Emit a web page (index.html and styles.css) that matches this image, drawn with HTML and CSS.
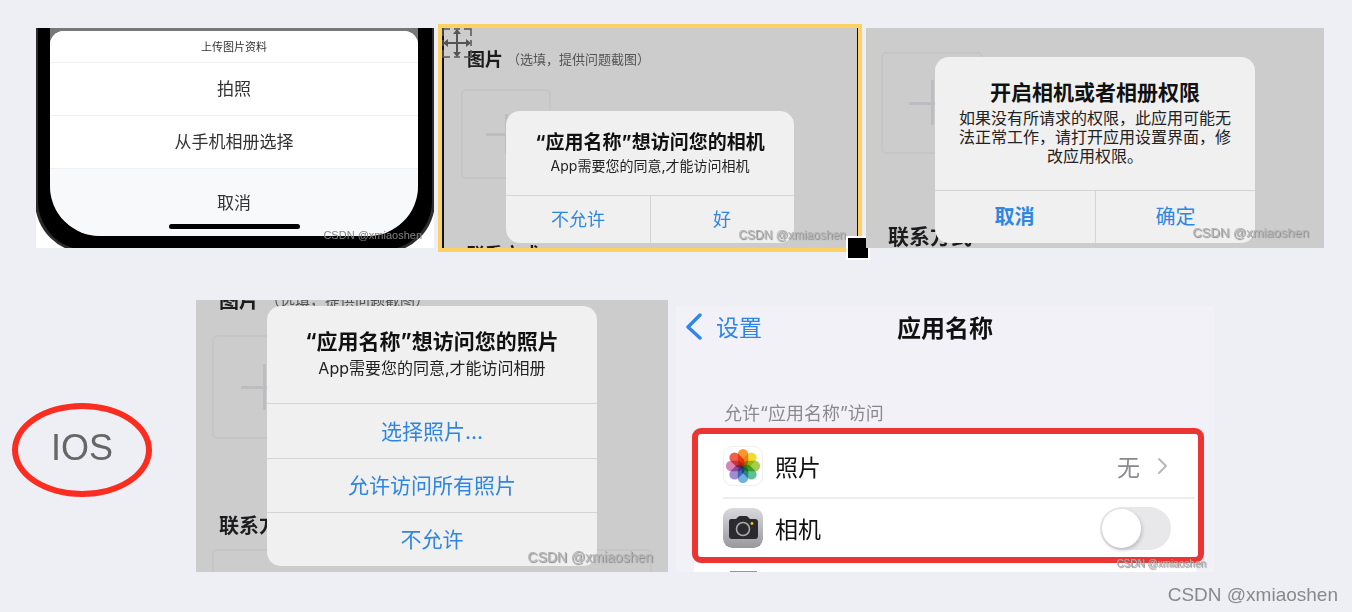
FILE: index.html
```html
<!DOCTYPE html>
<html lang="zh-CN">
<head>
<meta charset="utf-8">
<meta name="viewport" content="width=device-width, initial-scale=1">
<title>IOS 权限</title>
<link rel="stylesheet" href="styles.css">
</head>
<body>
<main class="board">
  <div class="row row-top">
    <section class="shot phone">
      <div class="bezel">
        <div class="screen">
          <div class="sheet">
            <h2 class="sheet-title">上传图片资料</h2>
            <button class="sheet-item" type="button">拍照</button>
            <button class="sheet-item" type="button">从手机相册选择</button>
            <button class="sheet-item sheet-cancel" type="button">取消</button>
            <div class="home-bar"></div>
          </div>
        </div>
      </div>
      <span class="mark mark-xs">CSDN @xmiaoshen</span>
    </section>

    <section class="shot selected">
      <div class="form form-camera">
        <p class="field"><b>图片</b><small>（选填，提供问题截图）</small></p>
        <div class="upload"></div>
        <p class="field"><b>联系方式</b></p>
      </div>
      <div class="alert">
        <div class="alert-text">
          <h2>“应用名称”想访问您的相机</h2>
          <p>App需要您的同意,才能访问相机</p>
        </div>
        <div class="actions">
          <button type="button">不允许</button>
          <button type="button">好</button>
        </div>
      </div>
      <span class="mark mark-s">CSDN @xmiaoshen</span>
      <svg class="move" viewBox="0 0 30 30" width="30" height="30" fill="none" stroke="#555" stroke-width="2">
        <path d="M1 8V1h7M12 1h6M22 1h7v7M1 12v6M29 12v6M1 22v7h7M12 29h6M22 29h7v-7" stroke-width="1.5"/>
        <path d="M15 4v22M4 15h22"/>
        <path d="M15 1l4 5h-8zM15 29l4-5h-8zM1 15l5-4v8zM29 15l-5-4v8z" fill="#555" stroke="none"/>
      </svg>
      <span class="handle"></span>
    </section>

    <section class="shot settings-ask">
      <div class="form form-ask">
        <p class="field"><b>图片</b></p>
        <div class="upload"></div>
        <p class="field"><b>联系方式</b></p>
      </div>
      <div class="alert alert-l">
        <div class="alert-text">
          <h2>开启相机或者相册权限</h2>
          <p>如果没有所请求的权限，此应用可能无法正常工作，请打开应用设置界面，修改应用权限。</p>
        </div>
        <div class="actions">
          <button class="strong" type="button">取消</button>
          <button type="button">确定</button>
        </div>
      </div>
      <span class="mark mark-m">CSDN @xmiaoshen</span>
    </section>
  </div>

  <div class="row row-bottom">
    <div class="platform">IOS</div>

    <section class="shot photos">
      <div class="form form-photos">
        <p class="field"><b>图片</b><small>（选填，提供问题截图）</small></p>
        <div class="upload"></div>
        <p class="field"><b>联系方式</b></p>
        <div class="textbox"></div>
      </div>
      <div class="alert alert-l">
        <div class="alert-text">
          <h2>“应用名称”想访问您的照片</h2>
          <p>App需要您的同意,才能访问相册</p>
        </div>
        <div class="actions stacked">
          <button type="button">选择照片...</button>
          <button type="button">允许访问所有照片</button>
          <button type="button">不允许</button>
        </div>
      </div>
      <span class="mark mark-l">CSDN @xmiaoshen</span>
    </section>

    <section class="settings">
      <header class="nav">
        <a class="back" href="#settings">
          <svg viewBox="0 0 16 28" width="16" height="28" fill="none" stroke="#2f86e8" stroke-width="3.400" stroke-linecap="round" stroke-linejoin="round"><path d="M14 3L2 15l12 11"/></svg>
          设置
        </a>
        <h1>应用名称</h1>
      </header>
      <p class="caption">允许“应用名称”访问</p>
      <div class="group">
        <a class="item" href="#photos">
          <svg class="app photos-app" viewBox="0 0 40 40" width="40" height="40">
            <g class="petals">
              <rect x="14.500" y="2" width="11" height="18" rx="5.500" fill="#f8972c"/>
              <rect x="14.500" y="2" width="11" height="18" rx="5.500" fill="#f0dc30" transform="rotate(45 20 20)"/>
              <rect x="14.500" y="2" width="11" height="18" rx="5.500" fill="#a2d046" transform="rotate(90 20 20)"/>
              <rect x="14.500" y="2" width="11" height="18" rx="5.500" fill="#5cc094" transform="rotate(135 20 20)"/>
              <rect x="14.500" y="2" width="11" height="18" rx="5.500" fill="#70b0e6" transform="rotate(180 20 20)"/>
              <rect x="14.500" y="2" width="11" height="18" rx="5.500" fill="#a08cd0" transform="rotate(225 20 20)"/>
              <rect x="14.500" y="2" width="11" height="18" rx="5.500" fill="#d884bc" transform="rotate(270 20 20)"/>
              <rect x="14.500" y="2" width="11" height="18" rx="5.500" fill="#f0604e" transform="rotate(315 20 20)"/>
            </g>
          </svg>
          <span class="name">照片</span>
          <span class="value">无</span>
          <svg viewBox="0 0 11 18" width="11" height="18" fill="none" stroke="#b8b8bb" stroke-width="2" stroke-linecap="round" stroke-linejoin="round"><path d="M2 2l7 7-7 7"/></svg>
        </a>
        <label class="item">
          <svg class="app" viewBox="0 0 40 40" width="40" height="40">
            <defs><linearGradient id="metal" x1="0" y1="0" x2="0" y2="1"><stop offset="0" stop-color="#d9d9de"/><stop offset="1" stop-color="#98989d"/></linearGradient></defs>
            <rect width="40" height="40" rx="9" fill="url(#metal)"/>
            <path d="M8 11h5l2-2q1-1 2-1h6q1 0 2 1l2 2h5q3 0 3 3v14q0 3-3 3H9q-3 0-3-3V14q0-3 2-3z" fill="#2b2b2d"/>
            <circle cx="20" cy="21" r="6.500" fill="#2b2b2d" stroke="#a9a9ad" stroke-width="1.600"/>
            <circle cx="29" cy="15.500" r="1.400" fill="#f2c230"/>
          </svg>
          <span class="name">相机</span>
          <input class="switch" type="checkbox">
        </label>
      </div>
      <div class="next"><span></span></div>
      <span class="mark mark-xxs">CSDN @xmiaoshen</span>
    </section>
  </div>
  <footer class="credit">CSDN @xmiaoshen</footer>
</main>
</body>
</html>
```
FILE: styles.css
```css
* { box-sizing: border-box; }
body {
  margin: 0;
  background: #eeeff4;
  color: #111;
  font-family: Inter, "Noto Sans CJK SC", sans-serif;
}
h1, h2, p { margin: 0; }
button {
  border: 0;
  padding: 0;
  background: none;
  font: inherit;
  color: inherit;
}
a { color: inherit; text-decoration: none; }

.board { display: flex; flex-direction: column; min-height: 100vh; }
.row { display: flex; gap: 8px; }
.row-top { padding: 28px 28px 0 36px; }
.row-bottom { padding: 52px 138px 0 12px; }
.shot { position: relative; min-width: 0; }

/* Action sheet on a phone */
.phone { flex: 398 1 0; display: flex; overflow: hidden; background: #fff; }
.bezel {
  flex: 1;
  margin: 0 -1px -5px;
  padding: 0 14px 14px 12px;
  background: #000;
  border: solid #2c2c2e;
  border-width: 0 3px 3px;
  border-radius: 0 0 52px 52px;
}
.screen {
  padding-top: 3px;
  background: #777;
  border-radius: 0 0 50px 50px;
  overflow: hidden;
}
.sheet {
  display: flex;
  flex-direction: column;
  align-items: stretch;
  padding-bottom: 7px;
  background: #f8f9fb;
  border-radius: 14px 14px 0 0;
  overflow: hidden;
  color: #333;
}
.sheet-title {
  height: 31px;
  background: #fff;
  font-size: 11px;
  font-weight: 400;
  line-height: 32px;
  text-align: center;
}
.sheet-item {
  height: 53px;
  padding-bottom: 3px;
  background: #fff;
  border-top: 1px solid #f0f0f0;
  font-size: 17px;
}
.sheet-cancel { height: 56px; padding: 10px 0 0; background: none; }
.home-bar { width: 131px; height: 5px; margin: 0 auto; background: #000; border-radius: 3px; }

/* Dimmed form behind the alerts */
.selected, .settings-ask, .photos { display: flex; justify-content: center; background: #ccc; }
.form { position: absolute; inset: 0; overflow: hidden; color: #1c1c1e; white-space: nowrap; }
.field { display: flex; align-items: center; height: 24px; }
.field b { font-weight: 700; }
.field small { font-size: 13px; color: #555; }
.upload {
  border: 2px solid #c6c6c9;
  border-radius: 5px;
  background:
    linear-gradient(#bcbcc1, #bcbcc1) center / 46% 3px no-repeat,
    linear-gradient(#bcbcc1, #bcbcc1) center / 3px 46% no-repeat;
}
.textbox { height: 60px; border: 2px solid #c6c6c9; border-radius: 5px; }

.form-camera { padding: 18px 19px 0; border: solid #111; border-width: 0 1px 0 2px; font-size: 18px; }
.form-camera .field { padding-left: 4px; gap: 4px; }
.form-camera .upload { width: 90px; height: 90px; margin: 19px 0 62px -2px; }

.form-ask { padding: 0 15px; font-size: 21px; }
.form-ask .field { padding-left: 7px; }
.form-ask .field:first-child { margin-top: -24px; }
.form-ask .upload { width: 102px; height: 102px; margin: 24px 0 69px; }

.form-photos { padding: 0 16px; font-size: 20px; }
.form-photos .field { padding-left: 7px; gap: 6px; }
.form-photos .field small { font-size: 15px; }
.form-photos .field:first-child { margin-top: -13px; }
.form-photos .upload { width: 104px; height: 104px; margin: 24px 0 73px; }
.form-photos .textbox { margin-top: 13px; }

/* Alerts */
.selected { flex: 416 1 0; padding: 83px 0 5px; outline: 4px solid #fdd163; }
.settings-ask { flex: 458 1 0; padding: 29px 0 5px; z-index: 1; }
.photos { flex: 472 1 0; padding: 6px 0; }
.alert {
  position: relative;
  width: 69%;
  display: flex;
  flex-direction: column;
  background: #f0f0f0;
  border-radius: 14px;
  font-size: 18px;
  text-align: center;
}
.alert-text { flex: 1; padding: 19px 0 0; }
.alert h2 { font-size: 19px; font-weight: 700; line-height: 26px; }
.alert p { color: #222; font-size: 14px; line-height: 20px; }
.alert-l { width: 70%; font-size: 20px; }
.alert-l .alert-text { padding: 23px 24px 0; }
.alert-l h2 { font-size: 21px; }
.alert-l p { padding-top: 3px; font-size: 16px; line-height: 19px; }
.actions { display: flex; border-top: 1px solid #d4d4d6; color: #2f86e0; }
.actions button { flex: 1; height: 47px; padding-bottom: 3px; }
.alert-l .actions button { height: 52px; }
.actions button + button { border-left: 1px solid #d4d4d6; }
.actions .strong { font-weight: 700; }
.photos .actions { flex-direction: column; font-size: 21px; }
.photos .actions button { flex: none; height: 54px; }
.photos .actions button + button { border-left: 0; border-top: 1px solid #d4d4d6; }
.photos .alert-text { height: 97px; flex: none; }
.photos .alert p { padding-top: 0; line-height: 26px; }

.move { position: absolute; top: 0; left: 0; }
.handle {
  position: absolute;
  right: -12px;
  bottom: -12px;
  width: 24px;
  height: 24px;
  background: #000;
  border: 2px solid #fff;
}

/* Watermarks */
.mark {
  position: absolute;
  right: 12px;
  bottom: 5px;
  color: #b4b4b4;
  font-family: "Liberation Sans", Arial, sans-serif;
  line-height: 16px;
  text-shadow: 1px 1px 1px #888;
  white-space: nowrap;
}
.mark-xxs { right: 8px; bottom: 0; font-size: 10px; }
.mark-xs { color: #858585; font-size: 11px; text-shadow: none; }
.mark-s { font-size: 12px; }
.mark-m { right: 15px; bottom: 7px; font-size: 13px; }
.mark-l { right: 15px; bottom: 7px; font-size: 14px; }

.platform {
  flex: none;
  display: grid;
  place-items: center;
  width: 140px;
  height: 94px;
  margin: 103px 36px 0 0;
  padding-bottom: 4px;
  border: 6px solid #fb2c20;
  border-radius: 50%;
  color: #666;
  font-family: "Liberation Sans", Arial, sans-serif;
  font-size: 36px;
}

/* Settings page */
.settings {
  position: relative;
  flex: 538 1 0;
  min-width: 0;
  margin-top: 6px;
  background: #f2f1f7;
}
.nav { display: grid; grid-template-columns: 1fr auto 1fr; align-items: center; height: 40px; padding: 0 10px; }
.nav h1 { font-size: 24px; font-weight: 700; }
.back { display: flex; align-items: center; gap: 14px; color: #2f86e8; font-size: 23px; }
.caption { padding: 54px 48px 0; color: #8a8a8e; font-size: 18px; line-height: 28px; }
.group {
  margin: 0 10px 0 16px;
  padding: 0 3px 0 25px;
  background: #fff;
  border: 6px solid #ec3432;
  border-radius: 9px;
}
.item { display: flex; align-items: center; height: 63px; padding-right: 27px; font-size: 23px; }
.item + .item { height: 60px; padding-right: 24px; border-top: 2px solid #ededef; }
.name { margin-left: 12px; }
.value { margin: 0 17px 0 auto; color: #8a8a8e; }
.app { flex: none; border-radius: 9px; }
.photos-app { border: 1px solid #f0f0f0; }
.petals { isolation: isolate; }
.petals rect { mix-blend-mode: multiply; }
.switch {
  appearance: none;
  width: 71px;
  height: 43px;
  margin: 0 0 0 auto;
  padding: 2px;
  background: #e8e8ea;
  border-radius: 22px;
}
.switch::before {
  content: "";
  display: block;
  width: 39px;
  height: 39px;
  background: #fff;
  border-radius: 50%;
  box-shadow: 1px 2px 4px rgba(0, 0, 0, 0.2);
}
.switch:checked { background: #34c759; }
.switch:checked::before { margin-left: auto; }
.next { height: 9px; margin: 0 18px; padding: 8px 0 0 36px; background: #fff; }
.next span { display: block; width: 27px; height: 1px; background: #7fa58a; }

.credit {
  margin-top: auto;
  padding: 0 14px 6px;
  color: #88898c;
  font-family: "Liberation Sans", Arial, sans-serif;
  font-size: 19px;
  line-height: 22px;
  text-align: right;
}
```
